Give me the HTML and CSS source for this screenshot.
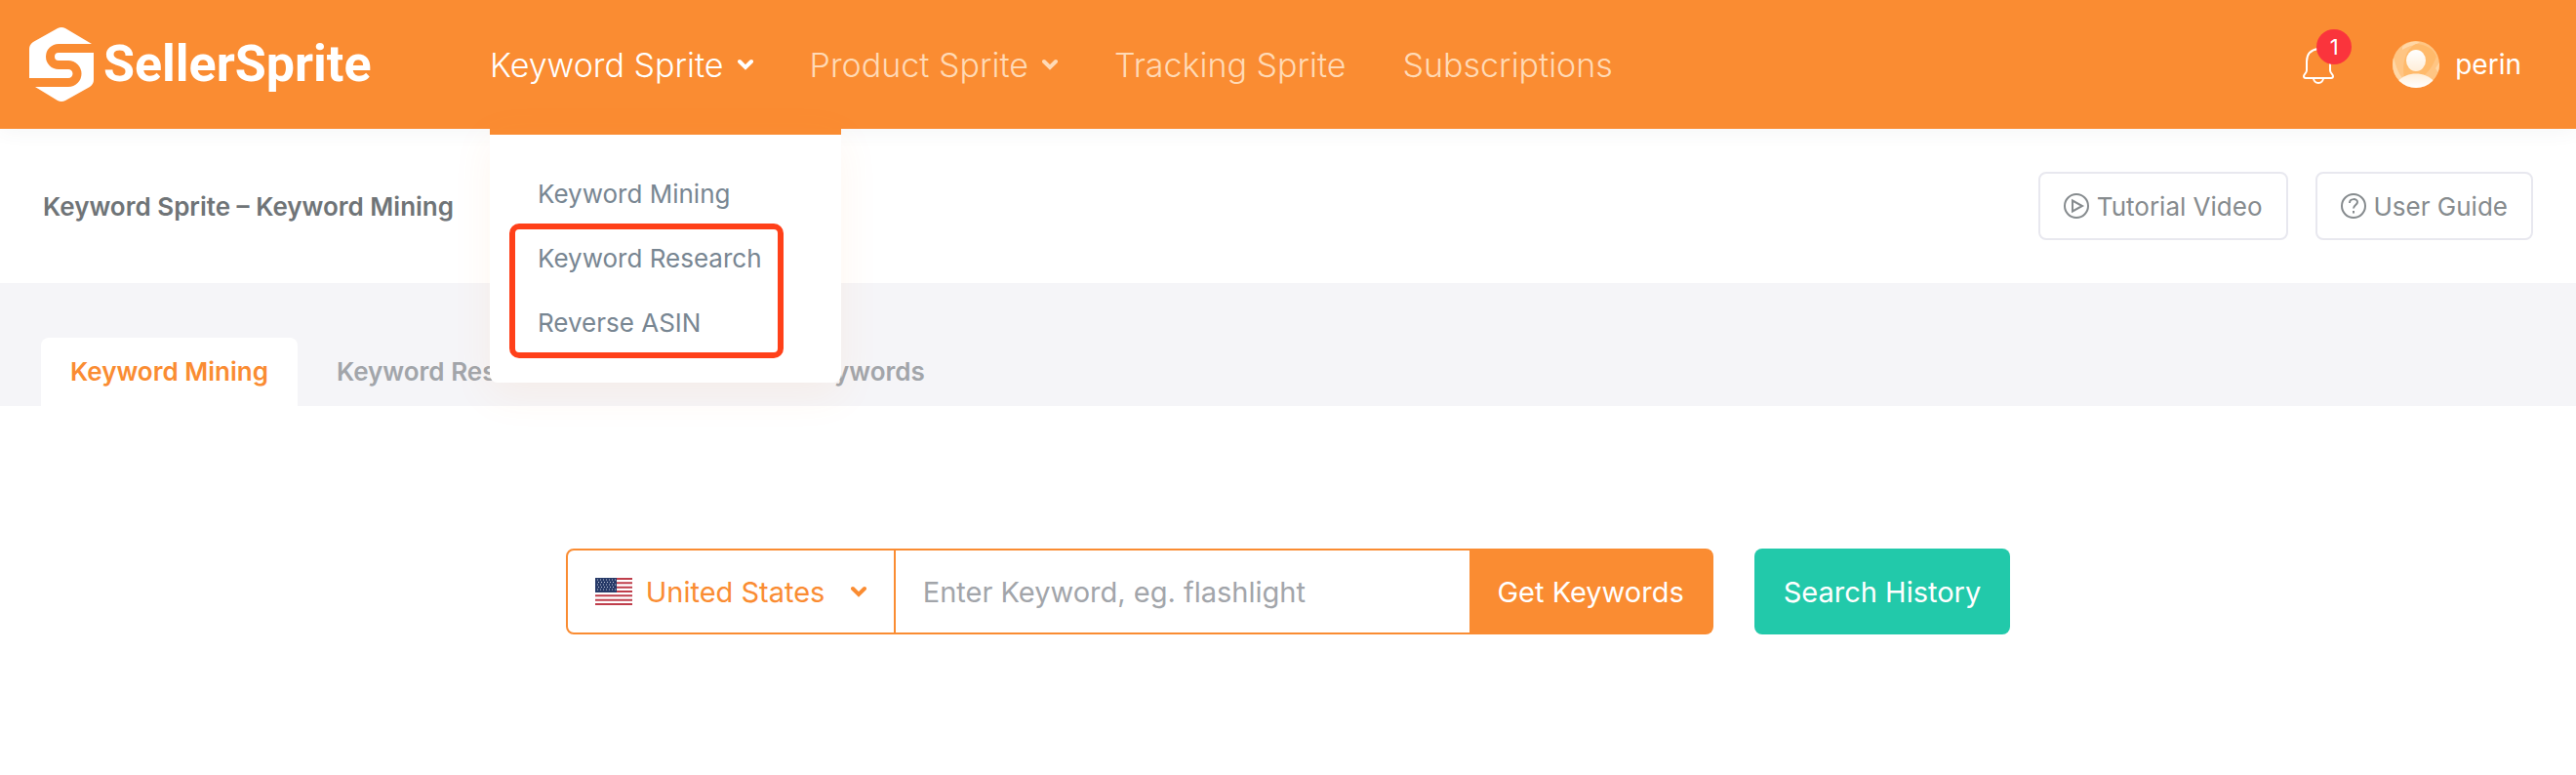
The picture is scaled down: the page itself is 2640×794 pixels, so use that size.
FILE: index.html
```html
<!DOCTYPE html>
<html lang="en">
<head>
<meta charset="utf-8">
<title>SellerSprite – Keyword Mining</title>
<link rel="stylesheet" href="styles.css">
</head>
<body>
<header class="header">
  <a class="logo" href="#">
    <svg class="logo-mark" viewBox="0 0 66 76" aria-hidden="true">
      <path fill="#fff" d="M0 52V22Q0 18 4 15L29 1Q33-1 37 1L64 17H30A13 13 0 0 0 30 43H40A4.500 4.500 0 0 1 40 52Z"/>
      <path fill="#fff" d="M66 26V54Q66 58 62 61L37 75Q33 77 29 75L6 61H40A13.500 13.500 0 0 0 40 34H30A4 4 0 0 1 30 26Z"/>
    </svg>
    <span class="logo-text">SellerSprite</span>
  </a>
  <nav class="nav" aria-label="Main">
    <div class="nav-item">
      <a class="nav-link nav-link-active" href="#">Keyword Sprite
        <svg class="chevron" viewBox="0 0 16 12" aria-hidden="true"><path d="M2 3l6 6 6-6"/></svg></a>
      <div class="menu">
        <a class="menu-link" href="#">Keyword Mining</a>
        <div class="menu-marked">
          <a class="menu-link" href="#">Keyword Research</a>
          <a class="menu-link" href="#">Reverse ASIN</a>
        </div>
      </div>
    </div>
    <a class="nav-link" href="#">Product Sprite
      <svg class="chevron" viewBox="0 0 16 12" aria-hidden="true"><path d="M2 3l6 6 6-6"/></svg></a>
    <a class="nav-link" href="#">Tracking Sprite</a>
    <a class="nav-link" href="#">Subscriptions</a>
  </nav>
  <div class="account">
    <button class="bell" type="button" aria-label="Notifications">
      <svg class="bell-icon" viewBox="0 0 32 40" aria-hidden="true">
        <path d="M16 4C8 5 4 10 4 17v9c0 3-3 4-3 6 0 1 1 2 2 2h26c1 0 2-1 2-2 0-2-3-3-3-6v-9C28 10 24 5 16 4Z"/>
        <path d="M11 34a5 5 0 0 0 10 0"/>
      </svg>
      <span class="badge">1</span>
    </button>
    <a class="user" href="#">
      <svg class="avatar" viewBox="0 0 48 48" aria-hidden="true">
        <defs>
          <clipPath id="disc"><circle cx="24" cy="24" r="24"/></clipPath>
          <linearGradient id="shade" x1="0" y1="0" x2="0" y2="1"><stop offset="0" stop-color="#fff"/><stop offset="1" stop-color="#ffeed8"/></linearGradient>
          <linearGradient id="torso" x1="0" y1="0" x2="0" y2="1"><stop offset="0" stop-color="#ffeed8"/><stop offset="1" stop-color="#fff"/></linearGradient>
        </defs>
        <g clip-path="url(#disc)">
          <path fill="#ffc583" d="M0 0h48v48H0z"/>
          <path fill="#ffd7a6" d="M0 14C3 22 4 32 12 40L0 48zM10 6C16 0 24 0 28 1c-5 4-10 3-18 8zM44 28l4-6v12z"/>
          <path fill="#ffba6b" d="M12 38C9 22 14 8 24 3c9 0 18 5 21 13-4 10-8 16-14 20z"/>
          <ellipse cx="24" cy="20" rx="10" ry="11" fill="url(#shade)"/>
          <path fill="url(#torso)" d="M6 41C14 31 34 31 42 41v7H6z"/>
        </g>
      </svg>
      <span>perin</span>
    </a>
  </div>
</header>
<main>
  <section class="titlebar">
    <h1 class="title">Keyword Sprite – Keyword Mining</h1>
    <div class="help">
      <a class="help-link" href="#">
        <svg class="help-icon" viewBox="0 0 26 26" aria-hidden="true"><circle cx="13" cy="13" r="12"/><path d="M9 7.500v11l10-5.500z"/></svg>
        Tutorial Video</a>
      <a class="help-link" href="#">
        <svg class="help-icon" viewBox="0 0 26 26" aria-hidden="true"><circle cx="13" cy="13" r="12"/><path d="M9 10c0-5 8-5 8-1 0 3-4 3-4 6.500M13 18v2.500"/></svg>
        User Guide</a>
    </div>
  </section>
  <nav class="tabs" aria-label="Keyword tools">
    <a class="tab tab-active" href="#">Keyword Mining</a>
    <a class="tab tab-wide" href="#">Keyword Research</a>
    <a class="tab" href="#">Keywords</a>
  </nav>
  <form class="search">
    <div class="search-box">
      <div class="country">
        <svg class="flag" viewBox="0 0 38 28" aria-hidden="true">
          <path fill="#fff" d="M0 0h38v28H0z"/>
          <path stroke="#bf3e4b" stroke-width="2" d="M0 1h38M0 5.300h38M0 9.700h38M0 14h38M0 18.300h38M0 22.700h38M0 27h38"/>
          <path fill="#273a68" d="M0 0h22v15H0z"/>
          <path stroke="#c2c9da" stroke-width="1" stroke-dasharray="1 2" d="M2 2h19M3 4.500h18M2 7h19M3 9.500h18M2 12h19"/>
        </svg>
        <select class="country-select" aria-label="Marketplace"><option>United States</option></select>
        <svg class="chevron" viewBox="0 0 16 12" aria-hidden="true"><path d="M2 3l6 6 6-6"/></svg>
      </div>
      <input class="keyword" type="text" aria-label="Keyword" placeholder="Enter Keyword, eg. flashlight">
      <button class="submit" type="submit">Get Keywords</button>
    </div>
    <button class="history" type="button">Search History</button>
  </form>
</main>
</body>
</html>
```
FILE: styles.css
```css
* {
  box-sizing: border-box;
}

body {
  margin: 0;
  background: #fff;
  color: #6f7477;
  font-family: Inter, "Noto Sans", sans-serif;
  font-size: 26px;
}

a {
  color: inherit;
  text-decoration: none;
}

button,
input,
select {
  font: inherit;
}

.header {
  position: relative;
  z-index: 1;
  display: flex;
  align-items: center;
  height: 132px;
  padding: 0 56px 0 30px;
  background: #fa8c32;
  box-shadow: 0 2px 20px rgba(60, 80, 100, 0.06);
  color: #fff;
}

.logo {
  display: flex;
  align-items: center;
  gap: 10px;
  width: 472px;
}

.logo-mark {
  width: 66px;
  height: 76px;
}

.logo-text {
  font-family: Roboto, "Liberation Sans", sans-serif;
  font-size: 52px;
  font-weight: 700;
  line-height: 60px;
}

.nav {
  display: flex;
  align-self: stretch;
  gap: 58px;
  font-size: 34px;
  font-weight: 300;
}

.nav-item {
  position: relative;
  display: flex;
}

.nav-link {
  display: flex;
  align-items: center;
  gap: 14px;
  color: #ffdab6;
}

.nav-link-active {
  color: #fff;
}

.chevron {
  width: 16px;
  height: 12px;
  fill: none;
  stroke: currentColor;
  stroke-width: 4;
  stroke-linecap: round;
}

.menu {
  position: absolute;
  top: 100%;
  left: 0;
  width: 360px;
  padding: 28px 0;
  border-top: 6px solid #fa8c32;
  border-radius: 0 0 8px 8px;
  background: #fff;
  box-shadow: 0 12px 40px rgba(250, 140, 50, 0.08);
  color: #788692;
  font-size: 26px;
  font-weight: 400;
}

.menu-link {
  display: block;
  padding: 0 49px;
  line-height: 66px;
  white-space: nowrap;
}

.menu-marked {
  position: relative;
}

.menu-marked::after {
  content: "";
  position: absolute;
  inset: -3px 59px -3px 20px;
  border: 6px solid #ff4019;
  border-radius: 10px;
  pointer-events: none;
}

.account {
  display: flex;
  align-items: center;
  gap: 60px;
  margin-left: auto;
}

.bell {
  position: relative;
  display: flex;
  padding: 0;
  border: 0;
  background: none;
  color: #fff;
}

.bell-icon {
  width: 32px;
  height: 40px;
  fill: none;
  stroke: currentColor;
  stroke-width: 2;
}

.badge {
  position: absolute;
  top: -16px;
  left: 14px;
  width: 36px;
  border-radius: 18px;
  background: #fa343c;
  font-size: 22px;
  line-height: 36px;
  text-align: center;
}

.user {
  display: flex;
  align-items: center;
  gap: 16px;
  font-size: 28px;
}

.avatar {
  width: 48px;
  height: 48px;
}

.titlebar {
  display: flex;
  align-items: center;
  justify-content: space-between;
  height: 158px;
  padding: 0 44px;
}

.title {
  margin: 0;
  font-size: 26px;
  font-weight: 600;
}

.help {
  display: flex;
  gap: 28px;
}

.help-link {
  display: flex;
  align-items: center;
  gap: 8px;
  height: 70px;
  padding: 0 24px;
  border: 2px solid #e8e8ef;
  border-radius: 8px;
  color: #868b8e;
}

.help-icon {
  width: 26px;
  height: 26px;
  fill: none;
  stroke: currentColor;
  stroke-width: 2;
}

.tabs {
  display: flex;
  align-items: flex-end;
  gap: 40px;
  height: 126px;
  padding: 0 42px;
  background: #f5f5f8;
  color: #a2a5aa;
  font-weight: 600;
}

.tab {
  line-height: 70px;
}

.tab-active {
  padding: 0 30px;
  border-radius: 8px 8px 0 0;
  background: #fff;
  color: #fa8c32;
}

.tab-wide {
  width: 438px;
}

.search {
  display: flex;
  justify-content: center;
  gap: 42px;
  padding: 146px 40px;
  font-size: 29px;
}

.search-box {
  display: flex;
  width: 1176px;
  height: 88px;
  border: 2px solid #fa8c32;
  border-radius: 8px;
}

.country {
  display: flex;
  align-items: center;
  width: 336px;
  padding: 0 28px;
  border-right: 2px solid #fa8c32;
  color: #fa8c32;
}

.flag {
  width: 38px;
  height: 28px;
}

.country-select {
  flex: 1;
  min-width: 0;
  padding: 0 0 0 14px;
  border: 0;
  background: none;
  color: inherit;
  appearance: none;
}

.keyword {
  flex: 1;
  min-width: 0;
  padding: 0 28px;
  border: 0;
  background: none;
}

.keyword::placeholder {
  color: #a2a5aa;
  opacity: 1;
}

.submit,
.history {
  border: 0;
  color: #fff;
}

.submit {
  padding: 0 28px;
  background: #fa8c32;
}

.history {
  padding: 0 30px;
  border-radius: 8px;
  background: #22c9aa;
}
```
